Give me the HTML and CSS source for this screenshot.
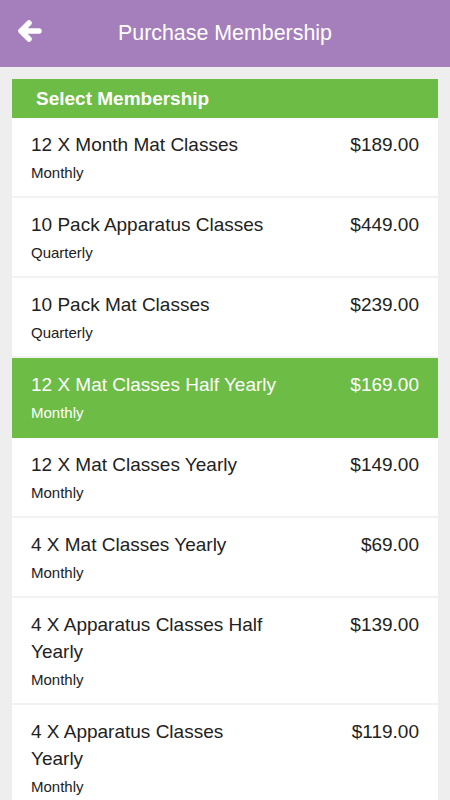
FILE: index.html
```html
<!DOCTYPE html>
<html>
<head>
<meta charset="utf-8">
<link rel="stylesheet" href="styles.css">
</head>
<body>
<header class="topbar">
  <span class="back">
    <svg width="24" height="22" viewBox="0 0 24 22"><path d="M11 3 L3 11 L11 19 M3 11 L21 11" fill="none" stroke="#fff" stroke-width="5.5" stroke-linecap="round" stroke-linejoin="round"/></svg>
  </span>
  <h1 class="title">Purchase Membership</h1>
</header>
<main class="content">
  <section class="card">
    <div class="card-head">Select Membership</div>
    <div class="row">
      <div class="row-top"><div class="name">12 X Month Mat Classes</div><div class="price">$189.00</div></div>
      <div class="period">Monthly</div>
    </div>
    <div class="row">
      <div class="row-top"><div class="name">10 Pack Apparatus Classes</div><div class="price">$449.00</div></div>
      <div class="period">Quarterly</div>
    </div>
    <div class="row">
      <div class="row-top"><div class="name">10 Pack Mat Classes</div><div class="price">$239.00</div></div>
      <div class="period">Quarterly</div>
    </div>
    <div class="row selected">
      <div class="row-top"><div class="name">12 X Mat Classes Half Yearly</div><div class="price">$169.00</div></div>
      <div class="period">Monthly</div>
    </div>
    <div class="row">
      <div class="row-top"><div class="name">12 X Mat Classes Yearly</div><div class="price">$149.00</div></div>
      <div class="period">Monthly</div>
    </div>
    <div class="row">
      <div class="row-top"><div class="name">4 X Mat Classes Yearly</div><div class="price">$69.00</div></div>
      <div class="period">Monthly</div>
    </div>
    <div class="row">
      <div class="row-top"><div class="name">4 X Apparatus Classes Half Yearly</div><div class="price">$139.00</div></div>
      <div class="period">Monthly</div>
    </div>
    <div class="row">
      <div class="row-top"><div class="name">4 X Apparatus Classes Yearly</div><div class="price">$119.00</div></div>
      <div class="period">Monthly</div>
    </div>
  </section>
</main>
</body>
</html>
```

FILE: styles.css
```css
html, body {
  margin: 0;
  padding: 0;
  background: #eeeeee;
  font-family: "Liberation Sans", Arial, sans-serif;
  color: #222;
}
.topbar {
  height: 67px;
  background: #a57fbb;
  display: flex;
  align-items: center;
  justify-content: center;
  position: relative;
}
.back {
  position: absolute;
  left: 18px;
  top: 20px;
  display: flex;
}
.title {
  margin: 0;
  font-weight: normal;
  font-size: 21.4px;
  color: #fff;
}
.content {
  padding: 12px 12px 0;
}
.card {
  background: #fff;
}
.card-head {
  background: #6cbc45;
  color: #fff;
  font-weight: bold;
  font-size: 19px;
  height: 39px;
  line-height: 40px;
  padding-left: 24px;
}
.row {
  padding: 13px 19px 13px;
  border-bottom: 2px solid #f2f2f2;
}
.row.selected {
  background: #6cbc45;
  color: #fff;
  border-bottom-color: #6cbc45;
}
.row-top {
  display: flex;
  justify-content: space-between;
}
.name {
  flex: 0 0 247px;
  font-size: 19px;
  line-height: 27px;
}
.price {
  font-size: 19px;
  line-height: 27px;
  text-align: right;
}
.period {
  font-size: 15px;
  line-height: 20px;
  margin-top: 5px;
}
```
